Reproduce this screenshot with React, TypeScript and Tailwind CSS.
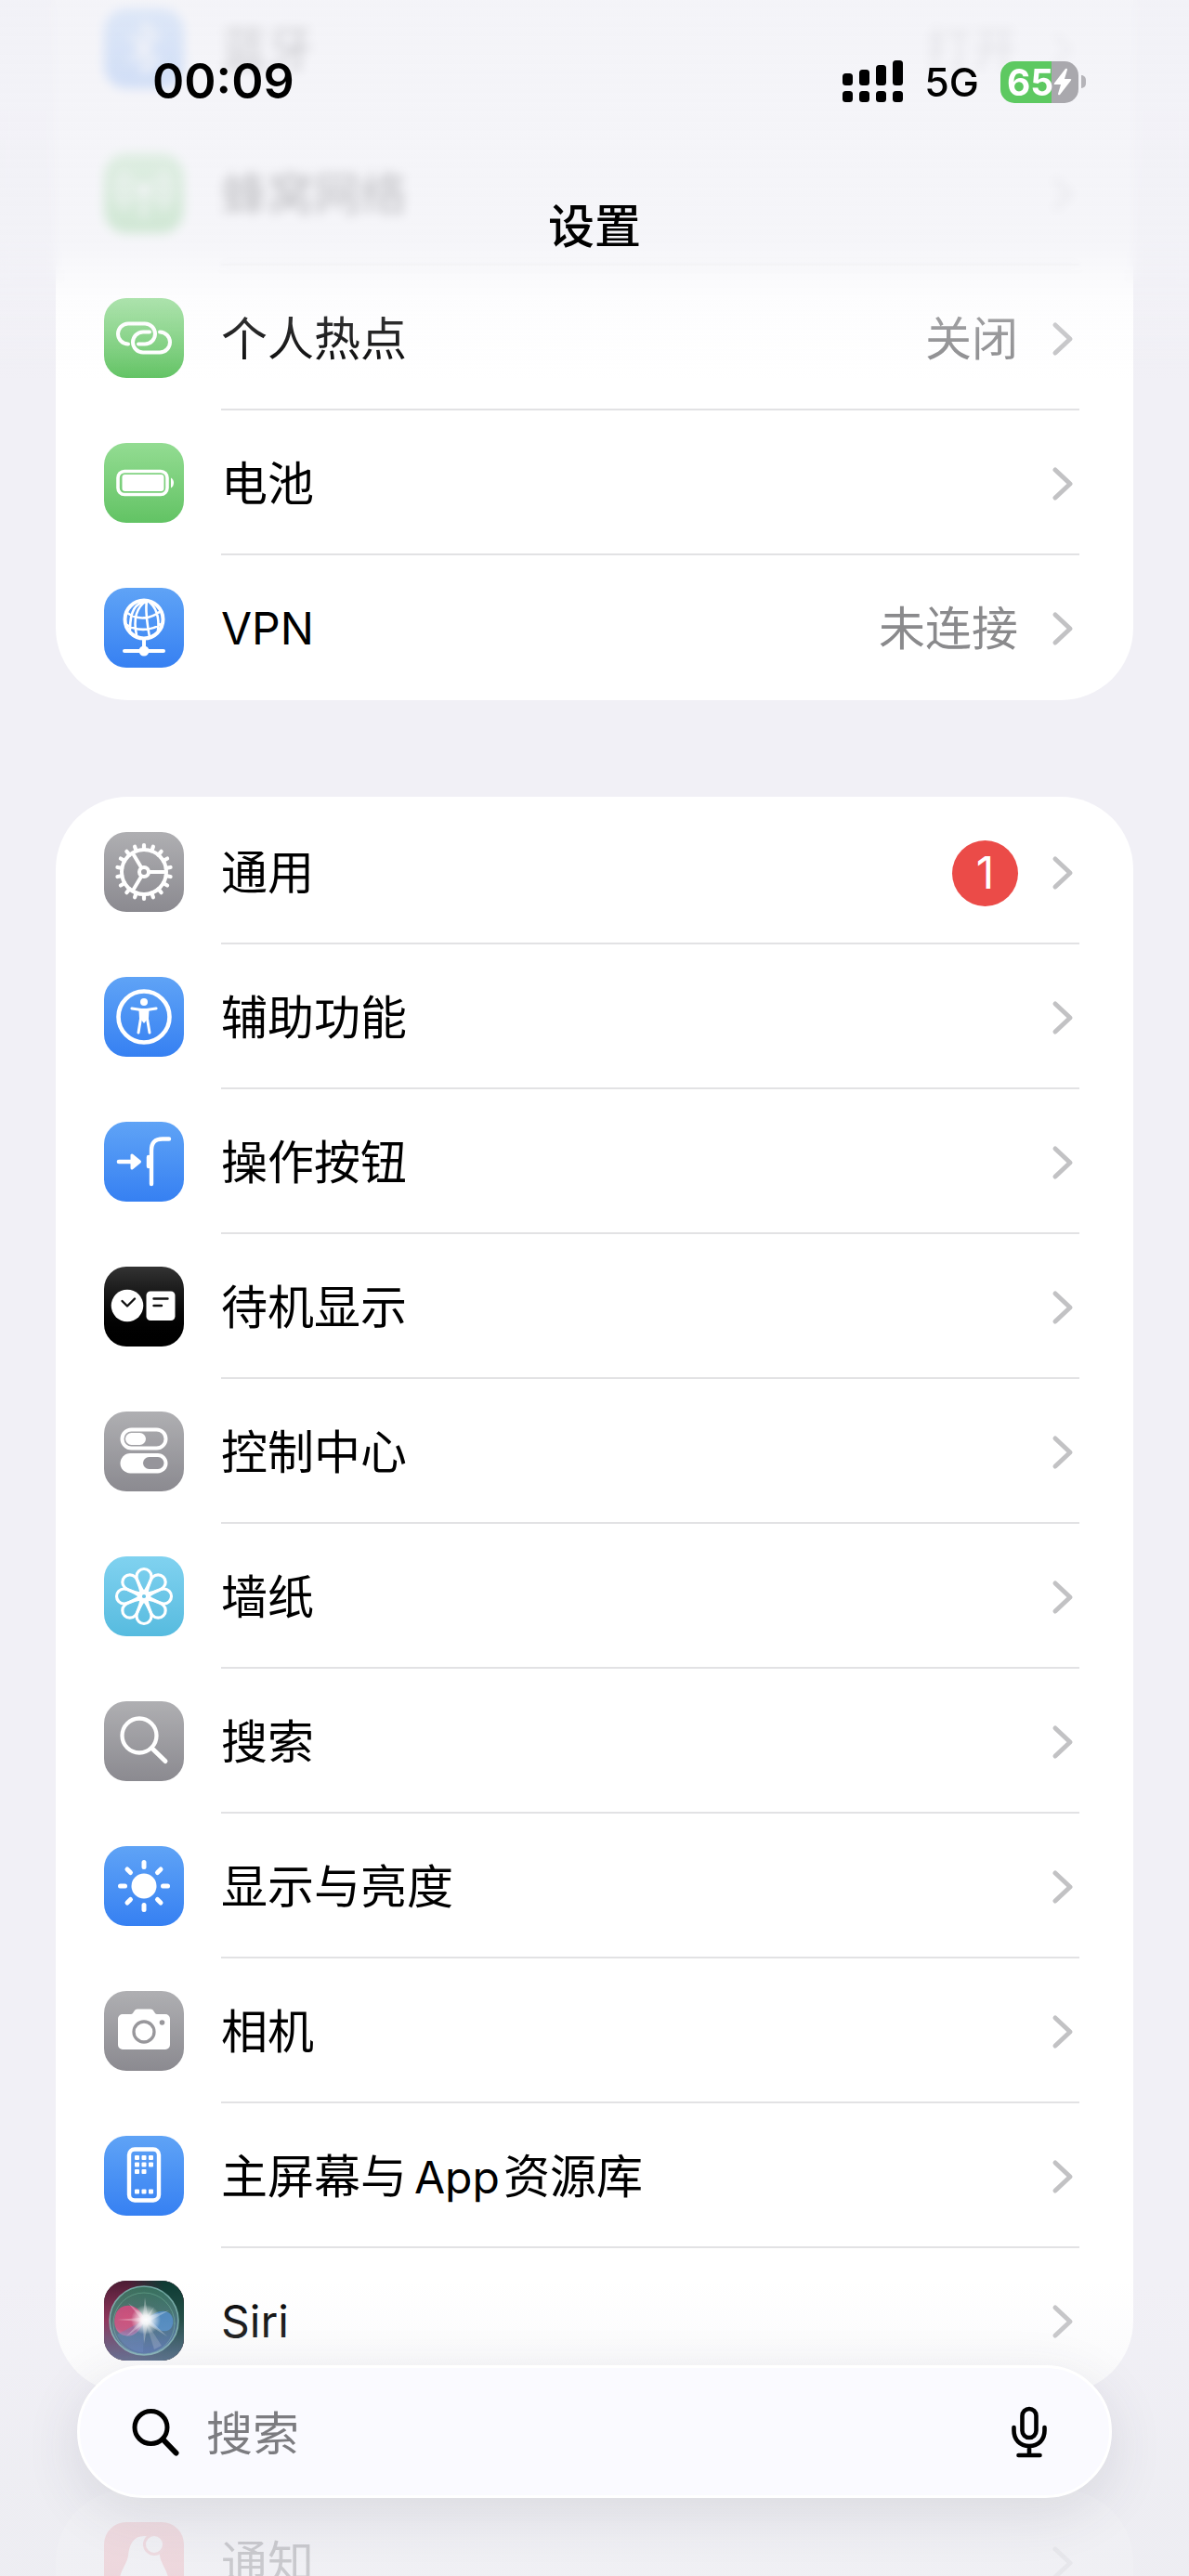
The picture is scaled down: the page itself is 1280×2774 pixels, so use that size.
import type {ReactNode} from 'react';

type Row = {label: string; icon: ReactNode; tile: string; value?: string; badge?: number};

const GREEN = 'from-[#93dc92] to-[#62c364]';
const BLUE = 'from-[#5fa3f6] to-[#3680f2]';
const GRAY = 'from-[#afafb2] to-[#8b8a90]';
const CYAN = 'from-[#80d2f0] to-[#56bbdf]';
const BLACK = 'from-[#333333] via-[#0c0c0c] to-black';
const RED = 'from-[#f4737b] to-[#ea4a55]';

function Glyph({children}: {children: ReactNode}) {
  return (
    <svg
      viewBox="0 0 86 86"
      className="size-full"
      fill="none"
      stroke="white"
      strokeWidth={4}
      strokeLinecap="round"
      strokeLinejoin="round"
      aria-hidden="true"
    >
      {children}
    </svg>
  );
}

const TEETH = Array.from({length: 18}, (_, i) => i * 20 + 10);
const EIGHTHS = Array.from({length: 8}, (_, i) => i * 45);

const bluetooth = (
  <Glyph>
    <path d="M29 30L57 56L43 69V17L57 30L29 56" />
  </Glyph>
);

const cellular = (
  <Glyph>
    <path d="M43 40V68M31 52a17 17 0 0 1 0-24M55 52a17 17 0 0 0 0-24M23 59a27 27 0 0 1 0-38M63 59a27 27 0 0 0 0-38" />
    <circle cx="43" cy="39" r="5" fill="white" />
  </Glyph>
);

const hotspot = (
  <Glyph>
    <path d="M26 49.5A11 11 0 0 1 26 27.5H44A11 11 0 0 1 44 49.5H37" />
    <path d="M60 36.5A11 11 0 0 1 60 58.5H42A11 11 0 0 1 42 36.5H49" />
  </Glyph>
);

const battery = (
  <Glyph>
    <rect x="15" y="30.500" width="53" height="25" rx="7" strokeWidth={3.6} />
    <rect x="19.500" y="34" width="45" height="18" rx="3" fill="white" stroke="none" />
    <path d="M72 37.500a6.500 6.500 0 0 1 0 11z" fill="white" stroke="none" />
  </Glyph>
);

const vpn = (
  <Glyph>
    <circle cx="43" cy="34" r="20.500" />
    <path
      d="M46 14C36 20 31 32 35 51M46 14C44 26 47 42 49 53M47 14C56 20 60 32 58 46M45 14C34 17 28 24 28 45M25 27C36 35 50 34 61 25M23 39C34 47 51 47 63 38"
      strokeWidth={2.600}
    />
    <path d="M43 55V66M22 68H64" />
    <circle cx="43" cy="68" r="5.500" fill="white" stroke="none" />
  </Glyph>
);

const general = (
  <Glyph>
    <circle cx="43" cy="43" r="24" />
    {TEETH.map((a) => (
      <path key={a} d="M67 43H72" strokeWidth={4.200} transform={`rotate(${a} 43 43)`} />
    ))}
    <circle cx="43" cy="43" r="5" strokeWidth={4} />
    <path d="M49 43H66M40 38L31 23M40 48L31 63" />
  </Glyph>
);

const accessibility = (
  <Glyph>
    <circle cx="43" cy="43" r="27.500" strokeWidth={4.600} />
    <circle cx="43" cy="27" r="4" fill="white" stroke="none" />
    <path d="M30 34L40 35.500H46L56 34" strokeWidth={3.200} />
    <path d="M39 36H47L46.500 45L49 60M39 36L39.500 45L37 60" strokeWidth={3} />
    <path d="M39 35H47V45L43 50L39 45Z" fill="white" stroke="none" />
  </Glyph>
);

const actionButton = (
  <Glyph>
    <path d="M16 43H30" strokeWidth={4.600} />
    <path d="M30 36V50L38.500 43Z" fill="white" strokeWidth={3} />
    <path d="M51 67V31C51 22 55 18.500 63 18.500H70" strokeWidth={4.400} />
    <path d="M48 38V48" strokeWidth={4.500} />
  </Glyph>
);

const standby = (
  <Glyph>
    <circle cx="25" cy="42" r="17.300" fill="white" stroke="none" />
    <path d="M19.500 37L25 42.500L33 34.500" stroke="#111" strokeWidth={2.400} />
    <rect x="45.500" y="26.500" width="31" height="31.500" rx="4.500" fill="white" stroke="none" />
    <path d="M53.500 34.500H68.500M53.500 42H62" stroke="#111" strokeWidth={2.400} />
  </Glyph>
);

const controlCenter = (
  <Glyph>
    <rect x="19.500" y="19.500" width="47" height="20" rx="10" />
    <rect x="23" y="23" width="22" height="13" rx="6.500" fill="white" stroke="none" />
    <rect x="17.500" y="45" width="51" height="21.500" rx="10.700" fill="white" stroke="none" />
    <rect x="42" y="49" width="22.500" height="13" rx="6.500" fill="#96959b" stroke="none" />
  </Glyph>
);

const wallpaper = (
  <Glyph>
    {EIGHTHS.map((a) => (
      <path
        key={a}
        d="M40 41C40 33 35 27 35 21.500A8 8 0 0 1 51 21.500C51 27 46 33 46 41"
        strokeWidth={3.200}
        transform={`rotate(${a} 43 43)`}
      />
    ))}
  </Glyph>
);

const search = (
  <Glyph>
    <circle cx="38" cy="37" r="18.500" strokeWidth={4.300} />
    <path d="M51.500 50.500L66 64.500" strokeWidth={5} />
  </Glyph>
);

const brightness = (
  <Glyph>
    <circle cx="43" cy="43" r="13.500" fill="white" stroke="none" />
    {EIGHTHS.map((a) => (
      <path key={a} d="M43 17.500V22.500" strokeWidth={5} transform={`rotate(${a} 43 43)`} />
    ))}
  </Glyph>
);

const camera = (
  <Glyph>
    <path
      d="M20 25H29C32 25 32 19.500 36 19.500H50C54 19.500 54 25 57 25H66A5 5 0 0 1 71 30V58A5 5 0 0 1 66 63H20A5 5 0 0 1 15 58V30A5 5 0 0 1 20 25Z"
      fill="white"
      stroke="none"
    />
    <circle cx="43" cy="44" r="11" stroke="#98979b" strokeWidth={3.300} />
    <circle cx="62.500" cy="34" r="2.800" fill="#98979b" stroke="none" />
  </Glyph>
);

const DOTS = [
  [33, 21], [40.5, 21], [48, 21],
  [33, 28.5], [40.5, 28.5], [48, 28.5],
  [33, 36], [40.5, 36],
  [33, 57.5], [40.5, 57.5], [48, 57.5]
];

const homeScreen = (
  <Glyph>
    <rect x="27" y="14.500" width="32" height="55" rx="6" strokeWidth={4.400} />
    {DOTS.map(([x, y]) => (
      <rect key={`${x}-${y}`} x={x} y={y} width="5" height="5" rx="1" fill="white" stroke="none" />
    ))}
  </Glyph>
);

const siri = (
  <Glyph>
    <defs>
      <linearGradient id="siri-left" x1="0" y1="0" x2="0" y2="1">
        <stop offset="0" stopColor="#4c1c34" />
        <stop offset="0.5" stopColor="#84204a" />
        <stop offset="1" stopColor="#5f2a50" />
      </linearGradient>
      <linearGradient id="siri-right" x1="0" y1="0" x2="1" y2="0">
        <stop offset="0.3" stopColor="#0d3b33" stopOpacity="0" />
        <stop offset="0.75" stopColor="#0d3b33" />
      </linearGradient>
      <linearGradient id="siri-base" x1="0" y1="0" x2="0" y2="1">
        <stop offset="0.5" stopColor="#3c5680" stopOpacity="0" />
        <stop offset="1" stopColor="#3c5680" stopOpacity="0.8" />
      </linearGradient>
      <linearGradient id="siri-orb" x1="0" y1="0" x2="0.2" y2="1">
        <stop offset="0" stopColor="#35775b" />
        <stop offset="0.5" stopColor="#3d6f6c" />
        <stop offset="1" stopColor="#3f62a0" />
      </linearGradient>
      <radialGradient id="siri-pink" cx="0.4" cy="0.4" r="0.6">
        <stop offset="0" stopColor="#c9416f" />
        <stop offset="0.75" stopColor="#bd4474" />
        <stop offset="1" stopColor="#b86f9d" />
      </radialGradient>
      <radialGradient id="siri-glow">
        <stop offset="0" stopColor="white" />
        <stop offset="0.3" stopColor="white" stopOpacity="0.9" />
        <stop offset="1" stopColor="white" stopOpacity="0" />
      </radialGradient>
    </defs>
    <g stroke="none">
      <rect width="86" height="86" fill="url(#siri-left)" />
      <rect width="86" height="86" fill="url(#siri-right)" />
      <rect width="86" height="86" fill="url(#siri-base)" />
      <circle cx="43" cy="43" r="37" fill="url(#siri-orb)" opacity="0.9" />
      <path d="M44 42C38 28 30 26 24 27C12 28 10 42 12 49C14 58 24 62 32 58C39 54 41 48 44 42Z" fill="url(#siri-pink)" />
      <path d="M45 42C54 34 62 31 69 34C76 38 76 49 70 53C62 57 53 50 45 42Z" fill="#4585c6" opacity="0.85" />
      <path d="M44 42L14 58C20 70 32 77 42 77Z" fill="#5578b8" opacity="0.4" />
      <path d="M44 42L62 70L54 74Z" fill="white" opacity="0.18" />
      <path d="M44 18L47 37L54 28L49 38L70 32L50 43L68 60L47 47L43 68L42 47L24 60L39 44L14 42L39 40L26 24L42 37Z" fill="white" opacity="0.3" />
      <circle cx="45" cy="42" r="16" fill="url(#siri-glow)" />
    </g>
    <circle cx="43" cy="43" r="37" stroke="#7fb9b5" strokeWidth={1.600} opacity="0.8" />
    <circle cx="43" cy="46" r="33" stroke="#7fc9a8" strokeWidth={1} opacity="0.4" />
  </Glyph>
);

const notifications = (
  <Glyph>
    <path d="M43 15C32 15 27 24 26 36C25 44 18 52 17 60H69C68 52 61 44 60 36C60 22 54 15 43 15Z" fill="white" stroke="none" />
    <path d="M35 65a8 8 0 0 0 16 0z" fill="white" stroke="none" />
    <circle cx="54" cy="24" r="10.500" fill="white" stroke="#f0707a" strokeWidth={3} />
  </Glyph>
);

const NETWORK: Row[] = [
  {label: '蓝牙', icon: bluetooth, tile: BLUE, value: '打开'},
  {label: '蜂窝网络', icon: cellular, tile: GREEN},
  {label: '个人热点', icon: hotspot, tile: GREEN, value: '关闭'},
  {label: '电池', icon: battery, tile: GREEN},
  {label: 'VPN', icon: vpn, tile: BLUE, value: '未连接'}
];

const DEVICE: Row[] = [
  {label: '通用', icon: general, tile: GRAY, badge: 1},
  {label: '辅助功能', icon: accessibility, tile: BLUE},
  {label: '操作按钮', icon: actionButton, tile: BLUE},
  {label: '待机显示', icon: standby, tile: BLACK},
  {label: '控制中心', icon: controlCenter, tile: GRAY},
  {label: '墙纸', icon: wallpaper, tile: CYAN},
  {label: '搜索', icon: search, tile: GRAY},
  {label: '显示与亮度', icon: brightness, tile: BLUE},
  {label: '相机', icon: camera, tile: GRAY},
  {label: '主屏幕与 App 资源库', icon: homeScreen, tile: BLUE},
  {label: 'Siri', icon: siri, tile: BLACK}
];

const ALERTS: Row[] = [{label: '通知', icon: notifications, tile: RED}];

// Latin runs are set a little smaller than the Chinese around them
function Label({text}: {text: string}) {
  const [before, latin, after] = text.split(/ ?([A-Za-z]+) ?/);
  return (
    <span className="flex items-baseline whitespace-nowrap text-black">
      {before && <span className="mr-2">{before}</span>}
      {latin && <span className="text-[48px]">{latin}</span>}
      {after && <span className="ml-1">{after}</span>}
    </span>
  );
}

function SettingsRow({row, last}: {row: Row; last: boolean}) {
  return (
    <a href="#" className="flex h-[156px] items-center gap-10 pl-[52px] pr-[58px]">
      <span className={`size-[86px] shrink-0 overflow-hidden rounded-[24px] bg-linear-to-b ${row.tile}`}>{row.icon}</span>
      <span className={`flex h-full flex-1 items-center border-b-2 pt-1 pr-1.5 ${last ? 'border-transparent' : 'border-[#e2e2e4]'}`}>
        <Label text={row.label} />
        <span className="ml-auto flex items-center gap-9">
          {row.value && <span className="text-[#8a8a8c]">{row.value}</span>}
          {row.badge && (
            <span className="flex size-[71px] items-center justify-center rounded-full bg-[#eb4b48] text-[48px] text-white">
              {row.badge}
            </span>
          )}
          <svg viewBox="0 0 24 38" className="h-[38px] w-6" fill="none" stroke="#c2c2c4" strokeWidth={5} strokeLinecap="round" strokeLinejoin="round" aria-hidden="true">
            <path d="M4 4L20 19L4 34" />
          </svg>
        </span>
      </span>
    </a>
  );
}

function Group({rows, className}: {rows: Row[]; className: string}) {
  return (
    <section className={`bg-white ${className}`}>
      {rows.map((row, i) => (
        <SettingsRow key={row.label} row={row} last={i === rows.length - 1} />
      ))}
    </section>
  );
}

function StatusBar() {
  return (
    <div className="flex items-center justify-between pl-[164px] pr-[111px]">
      <span className="text-[52px] leading-[60px] font-semibold">00:09</span>
      <div className="flex items-center gap-[23px]">
        <svg viewBox="0 0 65 46" className="h-[46px] w-[65px]" aria-hidden="true">
          <rect x="0" y="14" width="11" height="13" rx="3.500" />
          <rect x="18" y="10" width="11" height="17" rx="3.500" />
          <rect x="36" y="5" width="11" height="22" rx="3.500" />
          <rect x="54" y="0" width="11" height="27" rx="3.500" />
          <rect x="0" y="33" width="11" height="12" rx="3.500" />
          <rect x="18" y="33" width="11" height="12" rx="3.500" />
          <rect x="36" y="33" width="11" height="12" rx="3.500" />
          <rect x="54" y="33" width="11" height="12" rx="3.500" />
        </svg>
        <span className="text-[43px] leading-[46px] font-medium">5G</span>
        <div className="flex items-center gap-[3px]">
          <div className="flex h-[45px] w-[84px] items-center rounded-[15px] bg-linear-to-r from-[#5dc961] from-65% to-[#a9a8ad] to-65% pl-[7px]">
            <span className="text-[39px] leading-[45px] font-bold text-white">65</span>
            <svg viewBox="0 0 20 30" className="h-[30px] w-5 shrink-0" fill="white" aria-hidden="true">
              <path d="M13 1L1 16.500Q0 18 2 18H8L5 28Q5 30 7 29L19 13.500Q20 12 18 12H12L15 2Q15 0 13 1Z" />
            </svg>
          </div>
          <span className="h-3.5 w-[5px] rounded-r-full bg-[#b5b4b9]" />
        </div>
      </div>
    </div>
  );
}

export default function App() {
  return (
    <div className="relative h-screen overflow-hidden bg-[#f1f0f6] font-['Inter','Noto_Sans_CJK_SC',sans-serif] text-[50px] leading-[60px] text-black">
      <main className="-mt-[26px] flex flex-col gap-[104px] px-[60px]">
        <Group rows={NETWORK} className="rounded-b-[78px]" />
        <Group rows={DEVICE} className="rounded-[78px] pt-[3px]" />
        <Group rows={ALERTS} className="rounded-t-[78px]" />
      </main>

      <header className="absolute inset-x-0 top-0">
        <div className="absolute inset-x-0 top-0 h-[310px] mask-b-from-90% backdrop-blur-[6px]" />
        <div className="absolute inset-x-0 top-0 h-[260px] bg-linear-to-b from-[#f2f2f7]/86 to-[#f2f2f7]/76" />
        <div className="absolute inset-x-0 top-[260px] h-[150px] bg-linear-to-b from-[#f2f2f7]/76 via-[#f6f6fa]/26 via-40% to-white/0" />
        <div className="relative pt-[58px]">
          <StatusBar />
          <h1 className="mt-[96px] text-center font-medium">设置</h1>
        </div>
      </header>

      <footer className="absolute inset-x-0 bottom-0 bg-linear-to-b from-[#ececf1]/0 via-[#ececf1]/30 via-35% to-[#ededf2]/85 to-75% px-[83px] pt-[90px] pb-[84px]">
        <form role="search" className="flex h-[143px] items-center rounded-full border-[3px] border-white bg-[#fafaff] pr-[67px] pl-14 shadow-[0_16px_60px_rgba(60,60,80,0.12)]">
          <svg viewBox="0 0 52 52" className="size-[52px] shrink-0" fill="none" stroke="black" strokeWidth={5} strokeLinecap="round" aria-hidden="true">
            <circle cx="20.500" cy="21" r="17.500" />
            <path d="M33.500 34L47.500 48.500" strokeWidth={6} />
          </svg>
          <input
            type="search"
            aria-label="搜索"
            placeholder="搜索"
            className="ml-7 h-full min-w-0 flex-1 bg-transparent pt-1 outline-none placeholder:text-[#7c7c80]"
          />
          <button type="button" aria-label="听写">
            <svg viewBox="0 0 38 56" className="h-14 w-[38px]" fill="none" stroke="black" strokeWidth={4.600} strokeLinecap="round" aria-hidden="true">
              <rect x="11.500" y="3" width="15" height="31" rx="7.500" />
              <path d="M2.500 23V26.500C2.500 36 9 43 19 43S35.500 36 35.500 26.500V23M19 43V52M7.500 53H30.500" />
            </svg>
          </button>
        </form>
      </footer>
    </div>
  );
}
